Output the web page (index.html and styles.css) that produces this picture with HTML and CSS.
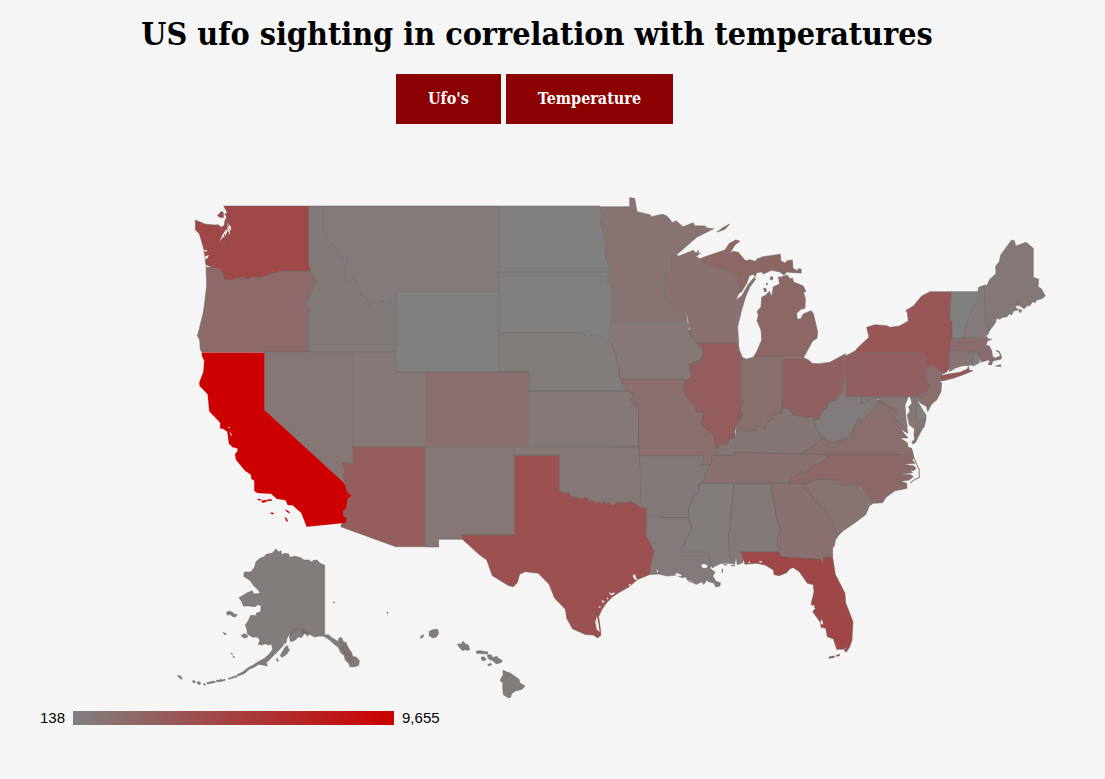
FILE: index.html
```html
<!DOCTYPE html>
<html lang="en">
<head>
<meta charset="utf-8">
<meta name="viewport" content="width=device-width, initial-scale=1">
<title>US ufo sighting in correlation with temperatures</title>
<link rel="stylesheet" href="styles.css">
</head>
<body>
<header class="header">
  <h1 class="title">US ufo sighting in correlation with temperatures</h1>
  <div class="buttons">
    <button class="button" type="button">Ufo's</button>
    <button class="button" type="button">Temperature</button>
  </div>
</header>
<main>
  <svg class="map" viewBox="0 570 3315 1530" role="img" aria-label="Map of ufo sightings by state">
    <!-- Backing so that no page colour shows between neighbouring states -->
    <g fill="#7d7373">
      <rect x="1845" y="990" width="360" height="360"/>
      <rect x="2220" y="1200" width="480" height="240"/>
      <rect x="1980" y="1350" width="510" height="300"/>
    </g>
    <!-- Northwest and Rockies -->
    <g transform="translate(540 570)">
      <path fill="#827a78" d="M386 48H428V118L446 150 441 154 460 164 487 201 505 203 495 235 500 250 493 262 496 272 505 277 521 263 541 300 543 314 557 320 570 347 574 338 590 341 597 334H631L636 322 649 338V487H386V375L392 358 377 347 411 268 393 244 386 225Z"/>
      <path fill="#847a7a" d="M428 48H958V305H649V338L636 322 631 334H597L590 341 574 338 570 347 557 320 543 314 541 300 521 263 505 277 496 272 493 262 500 250 495 235 505 203 487 201 460 164 441 154 446 150 428 118Z"/>
      <path fill="#8d6a6a" d="M78 229L92 228 100 233 117 235 129 250 132 266 152 272 172 264 190 263 203 269 220 261 240 263 300 244H393L411 268 377 347 392 358 386 375V487H66L61 480 59 450 52 437 57 420 70 367 75 330 80 285Z"/>
      <path fill="#867877" d="M518 487H649V546H737V770H518Z"/>
      <path fill="#867776" d="M253 487H518V820L510 824 500 817 486 820 490 850 491 878 253 660Z"/>
      <path fill="#818080" d="M649 305H958V546H649Z"/>
      <path fill="#a04848" d="M131 48H386V225L393 244H300L240 263 220 261 203 269 190 263 172 264 152 272 132 266 129 250 117 235 100 233 92 228 78 229 76 210 72 180 65 155 58 132 46 119V90L75 102 105 105 114 104 125 112 133 105 135 90 140 82 134 72 142 68Z"/>
      <path fill="#a04848" d="M112 77L120 68 131 72 130 83 120 82ZM120 68l6 -4 5 5-6 3z"/>
      <path class="water" d="M143 98L151 108 154 118 149 124 150 136 146 127 142 116ZM138 118L143 122 136 138 127 143 118 155 127 136ZM72 180L83 181 77 186ZM76 198L87 196 81 206 76 207ZM76 222L83 228 93 229 80 232Z"/>
      <path class="detail" stroke="#a04848" d="M139 88l8 14-4 10M133 132l4 18-10 13 8 8-12 7M146 115l6 5"/>
    </g>
    <!-- Plains -->
    <g transform="translate(1170 570)">
      <path fill="#808080" d="M328 48H629L635 70 632 105 646 145 648 205 657 225 659 247H328Z"/>
      <path fill="#808080" d="M328 247H659L657 257 645 268 664 288V398L657 403 662 420 655 444 666 459 628 436H601L594 442 574 428H328Z"/>
      <path fill="#827c7b" d="M328 428H574L594 442 601 436H628L666 459 669 477 680 488V515L689 530 690 560 692 568 714 603H416V546H328Z"/>
      <path fill="#8b6f6f" d="M107 546H416V770H107Z"/>
    </g>
    <!-- Southwest -->
    <g transform="translate(540 1020)">
      <path fill="#955e5e" d="M518 320H737V620H647L482 560 486 549 498 548 500 535 490 528 489 512 499 505 502 477 515 467 502 457 493 430 489 405 491 395 486 370 500 366 512 374 518 368Z"/>
      <path fill="#cc0000" class="bright" d="M65 38H253V210L493 430 502 457 515 467 502 477 499 505 489 512 490 528 500 535 498 548 380 560 364 519 338 496 323 495 317 481 290 476 273 461 232 459 223 453V422L214 417 213 404 195 392 168 359 165 343 173 333 172 325 158 322 147 311 142 275 130 267 120 265 121 249 88 214 83 163 59 138 58 127 70 97 73 62 66 48Z"/>
      <path fill="#cc0000" class="bright" d="M232 477l9 0 2 4-8 0zM243 482l14-2 4 5-14 3zM260 479l15-1 0 4-14 1zM270 518l10 0 1 5-7-1zM315 507l14 9 1 4-9-4zM314 531l6 4 4 9-5 0z"/>
      <path class="water" d="M145 261l5 0 0 3-4 0zM149 276l3 2 5 10-5-2z"/>
    </g>
    <g transform="translate(1260 1140)">
      <path fill="#867776" d="M17 200H283V465H124L127 478H56V501H17Z"/>
      <path fill="#847978" d="M326 33H624L637 43 642 46 632 60 645 77 656 82V200H326Z"/>
      <path fill="#857877" d="M283 200H655L658 228 664 290 662 382 600 385 418 350V226H283Z"/>
      <path fill="#9c5050" d="M283 226H418V332L435 341 445 337 453 349 484 356 500 352 508 366 519 361 530 370 540 365 544 376 550 363 558 371 565 367 579 377 593 367 625 368 629 363 662 382 680 383V466L704 515 695 540 694 565 688 584 652 599 628 620 600 636 578 650 560 668 545 690 536 710 541 745 543 766 533 774 520 765 497 764 457 746 440 715 436 688 404 655 387 613 355 580 316 575 299 583 292 608 280 620 266 617 217 587 200 540 180 526 127 478 124 465H283Z"/>
      <path class="water" d="M640 583l6 2 2 9 6 3-8 3-7-9zM627 611l6 2-6 8zM568 636l6 5 8-4 2 4-8 5-7-3zM561 652l4 2-3 7zM545 660l9 4-6 5zM536 679l8 1-7 4zM531 708L536 735 539 756 530 748 526 725Z"/>
      <path class="detail" stroke="#8c4b4b" d="M513 697l14 2 1 6-10-1"/>
    </g>
    <!-- Upper Midwest -->
    <g transform="translate(1770 570)">
      <path fill="#877372" d="M30 50H119V23L134 25 141 65 180 74 184 80 218 73 230 78 240 88 246 98 258 92 279 110 310 98 314 107 345 108 352 114 371 116 320 142 258 196 247 201V238L228 250 220 267 231 281 223 321 255 345 290 376 292 398H64V288L45 268 57 257 59 247 57 225 48 205 46 145 32 105 35 70Z"/>
      <path fill="#8a7070" d="M247 201L258 196 267 198 310 181 318 190 326 180 324 192 332 189 318 200 330 206 344 222 430 247 433 255 446 263 441 282 451 286 449 305 437 330 455 318 475 283 493 262 497 268 480 290 467 320 455 360 443 410 446 458H320L303 440 297 405 292 376 255 345 223 321 231 281 220 267 228 250 247 238Z"/>
      <path fill="#8d6666" d="M330 206L345 200 405 180 418 160 437 150 450 153 435 165 418 192 428 184 445 187 460 205 467 212 480 209 495 214 500 208 518 200 571 193 573 213 585 219 592 212 607 210 609 235 623 243 625 236 633 237 634 249 612 248 590 246 582 256 570 246 545 241 520 252 515 246 500 248 496 260 490 253 478 257 470 280 455 305 445 310 451 286 441 282 446 263 433 255 430 247 344 222Z"/>
      <path fill="#8d6666" d="M381 126L398 113 419 102 405 118ZM542 260l7 1-2 9-7-2zM528 279l5 1-2 6zM521 295l7 0 1 10-6 0zM565 260L570 262 592 255 600 266 607 264 611 276 640 288 648 305 640 306 646 325 645 355 633 358 620 370 622 388 632 386 640 372 663 362 670 370 683 425 681 445 668 453 641 502H490L500 485 515 450 513 420 501 392 505 375 501 365 513 350 515 322 528 315 538 304 545 320 550 290 569 282Z"/>
      <path fill="#857877" d="M64 398H292L297 405 295 420 303 440 320 458 340 480 338 495 330 510 302 520 298 535 305 552 300 562 290 572 283 568H92L89 560 88 530 80 515 78 495 67 477 66 459 55 444 62 420 57 403Z"/>
    </g>
    <!-- Midwest -->
    <g transform="translate(1800 990)">
      <path fill="#8c6e6e" d="M62 148H244L254 156 252 180 257 196 285 228 290 244 313 247 303 283 340 315 347 350 356 352 353 375 338 378 336 390 331 405H302L313 390 308 379H117L115 230 105 227 92 209 102 196 98 190 84 185Z"/>
      <path fill="#945d5d" d="M290 38H415L418 60 428 83V220L422 235 428 255 415 280 405 290 403 308 405 323 386 328 384 343 366 340 356 352 347 350 340 315 303 283 313 247 290 244 285 228 257 196 252 180 256 152 272 140 275 122 268 102 300 93 310 75V62Z"/>
      <path fill="#8a6f6f" d="M428 83L440 87 460 82H547V233L546 250 520 254 518 266 503 278 493 298 480 285 464 304 458 297 446 307 425 299 408 305 405 290 415 280 428 255 422 235 428 220Z"/>
      <path fill="#857574" d="M353 375L356 352 366 340 384 343 386 328 405 323 408 305 425 299 446 307 458 297 464 304 480 285 493 298 503 278 518 266 520 254 546 250 547 233 565 235 580 255 600 258 617 263 640 257 643 280 650 300 670 322 630 355 600 372 403 367V376Z"/>
      <path fill="#916161" d="M547 83H612L630 93 636 100 655 101 690 97 720 80 737 71V148H733L728 185 710 210 685 218 680 235 665 245 658 268 643 270 640 257 617 263 600 258 580 255 565 235 547 233Z"/>
    </g>
    <!-- Gulf and Deep South -->
    <g transform="translate(1890 1320)">
      <path fill="#827978" d="M27 47H218L223 60 212 75H241L235 90 222 105 228 115 208 135 206 158 190 165 185 185 175 205 178 233H50V203L32 200 34 110Z"/>
      <path fill="#837a79" d="M50 233H178V245L187 265 172 290 165 305 155 325V337H238L236 350 247 372 240 385 255 397 248 408 258 424 271 428 270 438 258 441 250 428 236 425 230 420 222 433 214 426 200 433 188 428 182 421 172 419 168 411 155 413 140 405 112 408 85 402 58 404 66 385 65 360 74 335 50 283Z"/>
      <path fill="#827c7b" d="M214 130H313L297 290 299 370 275 370 260 376 247 384 240 365 236 350 238 337H155V325L165 305 172 290 187 265 178 245 175 205 185 185 190 165 206 158 208 135Z"/>
      <path fill="#837978" d="M313 130H423L440 235 453 270 443 295V318L448 336H332L341 352 338 368 322 374 318 350 314 373 300 370 296 290Z"/>
      <path fill="#887170" d="M241 47H313L314 38 508 42 595 44 592 55 575 68 550 75 525 98 500 102 480 125 479 130H214L228 115 222 105 235 90 241 75 248 62Z"/>
      <path fill="#8a7070" d="M423 130H530L522 146 540 158 555 185 605 232 615 265 628 283 616 300 614 315 608 325V352L583 350 580 370 572 360 453 350 443 318V295L453 270 440 235Z"/>
      <path fill="#9f4747" d="M332 336H448L453 350 572 358 578 370 583 350 608 352 616 403 645 460 647 488 669 545 666 600 660 618 655 628 648 637 642 630 653 622 640 628 620 628 610 597 592 590 587 565 573 562 572 548 548 515 556 505 543 492 552 455 550 434 532 430 508 395 490 383 480 386 470 398 448 407 432 404 430 390 405 375 380 370 345 373 341 360 338 350Z"/>
      <path fill="#9f4747" d="M597 651l8-2 0 5-8 1zM607 648l6 0-1 5-5 0zM619 646l10-3 0 4-10 2z"/>
      <path class="water" d="M213 375l9-4 11 6-3 6-12 1zM134 401l10-1 10 5 0 4-14-2zM80 389l5 3-3 6zM360 362l-8 9 8-4zM574 538l5 8 0 9-7-7zM548 495l7 3-5 7zM385 363l12 1-4 5z"/>
      <path class="detail" stroke="#7b7373" d="M277 386v13M172 420l12 8M280 374l12 1M303 377l12 0"/>
    </g>
    <!-- Mid-Atlantic -->
    <g transform="translate(2340 1020)">
      <path fill="#867372" d="M72 440L85 427 115 417 175 420 185 436 235 438 282 488 268 498 257 524 225 548 190 572 176 585 168 575 155 532 105 485 90 458Z"/>
      <path fill="#8c6868" d="M29 430V420L50 402 75 398 100 375 125 368 142 355 146 343H398L401 354 397 360 405 370 370 373 402 378 408 386 400 392 390 390 398 398 360 402 392 404 400 410 388 420 362 424 380 430 381 445 372 447 345 452 318 472 308 488 282 490 237 438 185 436 175 420 115 417 80 430Z"/>
      <path class="outer" d="M397 340L410 374 417 387 418 413 405 418 390 429"/>
      <path fill="#8a6e6e" d="M60 343L95 320 130 292 150 305 185 300 208 292 235 235 250 240 265 220 285 200 300 180 318 195 350 215 345 240 355 242 380 262 384 280 362 268 384 294 360 294 382 308 384 321 395 325 400 343Z"/>
      <path fill="#8a6e6e" d="M402 283L412 274 428 265 420 280 406 308 398 312 396 305 404 298Z"/>
      <path fill="#867675" d="M243 170H385L375 195 378 235 382 262 355 242 345 240 343 220 350 210 330 200 318 195 300 180 290 175 275 178 255 185 243 195Z"/>
      <path fill="#867675" d="M390 170H408L412 238H438L432 262 412 275 402 283 404 266 388 255 382 225 390 213 386 200 396 190Z"/>
      <path fill="#827b7b" d="M193 118H197V170H245L243 195 255 185 275 178 290 175 297 185 285 200 265 220 252 242 235 235 208 292 185 300 160 307 150 305 130 292 110 270 103 250V240L118 238 125 215 140 205 145 188 170 180 188 155Z"/>
      <path class="line" d="M297 176L306 192 316 198 317 184"/>
      <path fill="#808080" d="M408 172L413 165 418 168 414 185 428 210 438 225V238H412Z"/>
      <path fill="#915f5f" d="M197 48L230 30V38H425L440 50V60L455 75 438 95 434 112 453 140 440 155 413 170H197Z"/>
      <path fill="#8a6e6e" d="M455 75L487 97 485 118 478 125 485 128 483 155 470 180 455 192 443 215 440 200 422 190 416 183V170L440 155 453 140 434 112 438 95Z"/>
    </g>
    <!-- Northeast -->
    <g transform="translate(2550 690)">
      <path fill="#9a5656" d="M19 368V357L57 322 50 292 75 284 110 287 120 292 148 288 175 273 172 250 168 241 190 228 215 198 240 185H304L301 240 300 270 306 273V325L299 360 298 415 291 425 280 432 276 426 245 405 230 398V380L215 368Z"/>
      <path fill="#9a5656" d="M264 454L275 448 272 438 290 433 330 427 352 417 355 409 358 421 369 422 340 434 310 445 280 452Z"/>
      <path fill="#80807e" d="M304 185H384L383 215 362 240 357 265 345 290 342 325H306V273L300 270Z"/>
      <path fill="#847a79" d="M384 185L386 172 403 166 407 278 418 300 415 312 398 325H342L345 290 357 265 362 240 383 215Z"/>
      <path fill="#847877" d="M403 166L412 165 418 150 438 130 437 108 448 95 452 75 485 30 493 32 497 48 528 37 550 55V142L566 148 564 170 575 177 578 184 586 198 576 206 560 210 555 218 548 215 540 226 530 228 523 236 514 232 508 224 502 232 505 240 490 243 486 254 478 252 470 261 458 262 448 268 440 264 437 277 430 287 418 303 407 278Z"/>
      <path fill="#847877" d="M497 222l9-4 2 6-8 4zM508 238l7 2-3 8-5-3z"/>
      <path class="water" d="M500 226l5 3-2 6-5 1zM513 231l4 3-4 3z"/>
      <path fill="#8b6c6c" d="M306 325H398L410 319 414 326 425 328 412 333 408 345 418 348 425 362 428 380 436 384 451 378 448 368 438 362 447 363 455 380 452 388 430 392 424 402 414 404 420 392 413 390 398 396 385 375 372 367 299 362Z"/>
      <path fill="#8b6c6c" d="M437 408l15-4 0 6zM417 403l10-2-3 4z"/>
      <path fill="#867574" d="M299 362L372 367 368 405 335 408 318 413 298 425Z"/>
      <path fill="#808080" d="M372 367L385 372 390 382 387 400 368 408ZM391 384l5 6-4 8z"/>
    </g>
    <!-- Alaska and Hawaii -->
    <g transform="translate(510 1620)" class="islands">
      <path d="M318 27L326 36 333 32 335 44 345 40 356 42 359 52 375 49 392 53 402 60 416 60 425 66 430 61 442 61 450 70 464 76V285L475 284 486 293 498 301 504 305 507 294 515 293 521 307 528 307 534 322 545 338 548 349 560 352 568 362 566 376 554 380 540 380 536 370 526 361 522 346 512 338 505 322 492 312 478 299 462 289 448 288 434 291 427 287 416 281 414 289 403 280 395 293 386 290 375 301 362 305 358 296 362 280 354 290 348 308 338 318 325 332 309 348 298 360 289 368 292 378 278 375 266 373 252 382 239 387 222 401 204 408 201 404 218 396 236 382 250 375 267 364 282 356 298 342 308 328 305 312 296 315 286 311 275 315 265 313 270 300 261 290 248 292 232 282 231 270 226 255 235 242 242 226 259 227 259 219 272 216 273 196 262 194 256 200 236 198 220 198 216 186 207 173 232 158 247 152 251 162 271 160 265 150 251 137 241 122 221 109 223 96 242 96 253 83 258 65 270 55 283 50 288 43 307 40 313 32Z"/>
      <path d="M169 218l8-5 10 4 6 5 9 2-6 7-9-2-8-6-6 3zM213 287l10-6 9 5 0 6-10 2zM159 276l10 6-4 3zM334 340l12-20 8-3-1 10 6 0-8 15-15 10-5-4zM320 354l6 8-5 2zM183 338l5 4-2 2zM190 347l4 5-4 0zM22 407l9 0 6 10-5 0zM67 422l8 1 0 6-5-1zM80 429l6-5 7 6-5 4zM101 431l4 0 1 5-4-1zM110 428l13-3 10-2 4 4-15 3-9 2zM139 420l9 1 4-4 6 3 7-3 0 4-15 4-10 0zM174 416l15-6 12-3 0 4-12 3-13 4zM490 186l3 0 0 3-3 0zM651 217l3 0 0 3-3 0z"/>
      <path class="detail" stroke="#6f6b6a" d="M511 302l8 12 4 20 12 10 4 12 12 10M524 314l8 18 10 12 5 12M513 321l12 18 10 18 9 12M362 281l9-11 12-7-7 10M359 293l9-21M389 271l9-3 2 12 10-4 9 7M393 281l12-14 3 12"/>
      <path class="water" d="M350 300l6-12 3 11-5 7zM341 311l4-2-5 8z"/>
      <path d="M778 274l10-5 14-1 4 11-6 11-10 4-13-7zM751 295l2-7 8-4-2 8zM862 313l14-2 3-8 7 9 9 3 4 14-7 2-9-2-5 3-9-9zM918 334l11-2 25 4-2 6-32-2zM933 352l8-2 7 6-3 6-9-1zM953 344l11 1 4 8 12-4 8 8 9 4-4 7-15 3-9-9-11-4-6-8zM953 374l10-4 2 4-9 4zM999 391l12 5 11 4 12 9 13 9 3 11 15 9-9 10-20 5-11 8-4 12-9-1-12-8-2-22 1-12-9-9 9-15z"/>
    </g>
  </svg>
  <div class="legend">
    <span>138</span>
    <span class="scale"></span>
    <span>9,655</span>
  </div>
</main>
</body>
</html>
```

FILE: styles.css
```css
body {
  margin: 0;
  background: #f5f5f5;
  color: #000;
  font-family: "DejaVu Serif Condensed", "DejaVu Serif", serif;
}

.header {
  display: flex;
  flex-direction: column;
  align-items: center;
  gap: 16px;
  padding: 10px 31px 0 0;
}

.title {
  margin: 0;
  font-family: "DejaVu Serif Condensed", "DejaVu Serif", serif;
  font-size: 32px;
  font-weight: bold;
  line-height: 48px;
  text-align: center;
}

.buttons {
  display: flex;
  gap: 5px;
  padding-right: 5px;
}

.button {
  padding: 16px 32px;
  border: 0;
  background: #8b0000;
  color: #fff;
  font-family: "DejaVu Serif Condensed", "DejaVu Serif", serif;
  font-size: 16px;
  font-weight: bold;
  line-height: 18px;
  cursor: pointer;
}

.map {
  display: block;
  width: 100%;
  margin-top: 66px;
}

.map path {
  stroke: #666;
  stroke-opacity: 0.5;
  stroke-width: 3;
  stroke-linejoin: round;
}

.map .bright {
  stroke: #cc0000;
  stroke-width: 1;
}

.map .water {
  fill: #f5f5f5;
  stroke: none;
}

.map .line,
.map .detail,
.map .outer {
  fill: none;
}

.map .detail {
  stroke: #7a6464;
  stroke-opacity: 1;
}

.map .outer {
  stroke: #8c6868;
  stroke-opacity: 1;
}

.islands {
  fill: #827c7b;
}

.legend {
  display: flex;
  align-items: center;
  gap: 8px;
  padding: 9px 40px;
  font: 15px/18px "Liberation Sans", Arial, sans-serif;
  text-shadow: 0 0 2px #fff;
}

.scale {
  width: 321px;
  height: 14px;
  background: linear-gradient(to right, #808080, #cc0000);
}
```
